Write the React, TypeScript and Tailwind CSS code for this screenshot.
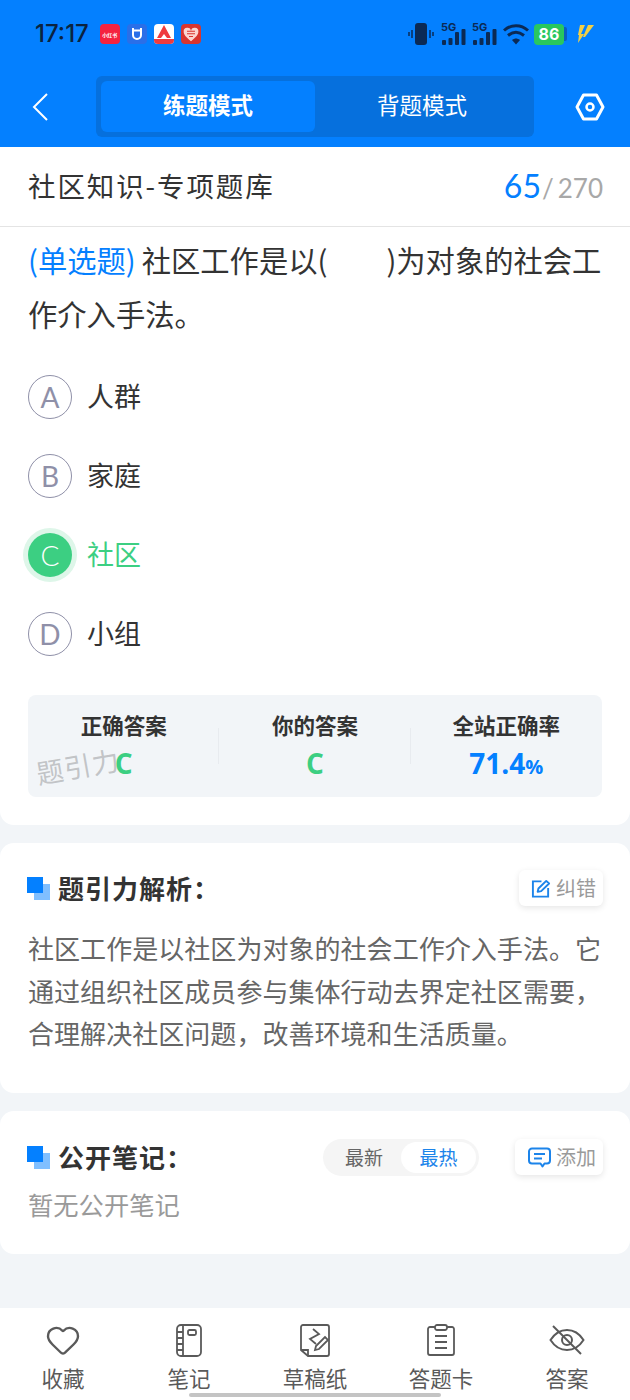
import React from "react";
import { Heart } from "lucide-react";

const cjk = { fontFamily: '"Noto Sans CJK SC", "Noto Sans", sans-serif' };

function Square() {
  return (
    <span className="relative block w-[23px] h-[23px] shrink-0 ml-[-1px]">
      <span className="absolute right-0 bottom-0 w-[16px] h-[16px] bg-[#80bfff]" />
      <span className="absolute left-0 top-0 w-[16px] h-[16px] bg-[#0480ff]" />
    </span>
  );
}

function Option({ l, t, active }: { l: string; t: string; active?: boolean }) {
  return (
    <div className="h-[79px] flex items-center gap-[15px]">
      {active ? (
        <span className="w-[44px] h-[44px] rounded-full bg-[#3ccf82] ring-[5px] ring-[#def6e9] flex items-center justify-center text-white text-[28px] font-light" style={{ fontFamily: "Lato, sans-serif" }}>
          {l}
        </span>
      ) : (
        <span className="w-[44px] h-[44px] rounded-full border-[1.5px] border-[#8f90a8] flex items-center justify-center text-[#8f90a8] text-[28px]" style={{ fontFamily: "Lato, sans-serif" }}>
          {l}
        </span>
      )}
      <span className={`text-[27px] ${active ? "text-[#3ccf82]" : "text-[#333333]"}`}>{t}</span>
    </div>
  );
}

function Stat({ label, value, blue, divider }: { label: string; value: React.ReactNode; blue?: boolean; divider?: boolean }) {
  return (
    <div className="flex-1 flex flex-col items-center pt-[15px] relative">
      <span className="text-[21.5px] font-bold text-[#333333] leading-[30px]">{label}</span>
      <span className={`text-[28px] font-bold leading-[42px] mt-[2px] ${blue ? "text-[#0480ff]" : "text-[#3ccf82]"}`} style={{ fontFamily: '"Open Sans", sans-serif' }}>{value}</span>
      {divider && <span className="absolute right-0 top-[33px] h-[36px] w-px bg-[#e8ebef]" />}
    </div>
  );
}

function SmallBtn({ icon, text, wide }: { icon: React.ReactNode; text: string; wide?: boolean }) {
  return (
    <div className={`h-[36px] rounded-[6px] bg-white shadow-[0_2px_6px_rgba(0,0,0,0.1)] flex items-center gap-[5px] ${wide ? "w-[88px] pl-[13px]" : "w-[84px] pl-[12px]"}`}>
      {icon}
      <span className="text-[20px] text-[#9a9a9a]">{text}</span>
    </div>
  );
}

function NavItem({ icon, label }: { icon: React.ReactNode; label: string }) {
  return (
    <div className="w-[126px] flex flex-col items-center">
      <div className="h-[38px] flex items-center justify-center">{icon}</div>
      <span className="text-[21.5px] leading-[30px] text-[#5a5a5a] mt-[4px]">{label}</span>
    </div>
  );
}

function Signal() {
  return (
    <svg width="26" height="26" viewBox="0 0 26 26">
      <text x="0" y="10" fontSize="11" fontWeight="700" fill="#0b2a55" fontFamily="Inter, sans-serif">5G</text>
      <rect x="1" y="19" width="4" height="5" rx="1" fill="#0b2a55" />
      <rect x="7.500" y="17" width="4" height="7" rx="1" fill="#0b2a55" />
      <rect x="14" y="11" width="4" height="13" rx="1" fill="#0b2a55" />
      <rect x="20.500" y="8" width="4" height="16" rx="1" fill="#0b2a55" />
    </svg>
  );
}

export default function App() {
  return (
    <div className="relative w-[630px] h-[1400px] overflow-hidden bg-[#f2f5f8] flex flex-col" style={cjk}>
      {/* Header */}
      <header className="bg-[#0480ff] h-[147px] shrink-0 flex flex-col">
        <div className="h-[76px] pt-[23px] pl-[35px] pr-[35px] flex items-start">
          <span className="text-[24px] leading-[22px] font-medium text-[#0b2340]" style={{ fontFamily: "Inter, sans-serif" }}>17:17</span>
          <div className="flex gap-[7px] ml-[11px] mt-[1px]">
            <span className="w-[20px] h-[20px] rounded-[4px] bg-[#f5223f] flex items-center justify-center text-white text-[5px] font-bold leading-none">小红书</span>
            <span className="w-[20px] h-[20px] rounded-[4px] bg-[#2a6fe8] flex items-center justify-center">
              <svg width="12" height="14" viewBox="0 0 12 14" fill="none"><path d="M2 1v7a4 4 0 0 0 8 0V1M2 3.500h8" stroke="#fff" strokeWidth="2" /></svg>
            </span>
            <span className="w-[20px] h-[20px] rounded-[4px] bg-white overflow-hidden flex flex-col items-center">
              <svg width="16" height="15" viewBox="0 0 16 15"><path d="M8 1L1 14h4l3-4 3 4h4z" fill="#ef3b3f" /></svg>
              <span className="w-full h-[5px] bg-[#ef3b3f]" />
            </span>
            <span className="w-[20px] h-[20px] rounded-[4px] bg-[#d9352e] flex items-center justify-center">
              <svg width="16" height="15" viewBox="0 0 24 22"><path d="M12 21C4 15 1 11 1 7a5.500 5.500 0 0 1 11-1 5.500 5.500 0 0 1 11 1c0 4-3 8-11 14z" fill="#fbd5cf" /><path d="M6 6h12M6 10h12M9 14h6" stroke="#d9352e" strokeWidth="1.600" /></svg>
            </span>
          </div>
          <div className="ml-auto flex items-center gap-[5px] mt-[-2px]">
            <svg width="26" height="24" viewBox="0 0 26 24">
              <rect x="7" y="1" width="12" height="22" rx="3" fill="#0b2a55" />
              <path d="M4 8v8M1 10v4M22 8v8M25 10v4" stroke="#0b2a55" strokeWidth="1.500" />
            </svg>
            <span className="ml-[2px]"><Signal /></span>
            <span><Signal /></span>
            <svg width="26" height="22" viewBox="0 0 26 22" fill="none">
              <path d="M1 7.500C8 1 18 1 25 7.500" stroke="#0b2a55" strokeWidth="3" />
              <path d="M5 12.500c5-4 11-4 16 0" stroke="#0b2a55" strokeWidth="3" />
              <path d="M9 17c3-2 5-2 8 0l-4 4.500z" fill="#0b2a55" />
            </svg>
            <span className="relative flex items-center">
              <span className="w-[30px] h-[21px] rounded-[4px] bg-[#29c75f] text-white text-[16px] font-bold flex items-center justify-center" style={{ fontFamily: "Inter, sans-serif" }}>86</span>
              <span className="w-[3px] h-[14px] rounded-r-[2px] bg-[#0b5fc0]" />
            </span>
            <svg width="18" height="20" viewBox="0 0 18 20" className="ml-[5px]">
              <path d="M3 1h5L4 10h3L1 19l1-8H1z" fill="#f3cf45" />
              <path d="M11 1h6l-9 12H6z" fill="#f3cf45" />
            </svg>
          </div>
        </div>
        <div className="flex items-center h-[61px] pl-[32px] pr-[25px]">
          <svg width="16" height="28" viewBox="0 0 16 28" fill="none" className="shrink-0">
            <path d="M15 1L2 14l13 13" stroke="#fff" strokeWidth="2" />
          </svg>
          <div className="ml-[48px] w-[438px] h-[61px] bg-[#0670dd] rounded-[6px] p-[5px] flex">
            <div className="w-[214px] h-[51px] pb-[3px] bg-[#0480ff] rounded-[6px] flex items-center justify-center text-white text-[22.5px] font-bold">练题模式</div>
            <div className="flex-1 pb-[3px] flex items-center justify-center text-white text-[22.5px]">背题模式</div>
          </div>
          <svg width="30" height="28" viewBox="0 0 30 28" fill="none" className="ml-auto">
            <path d="M8.500 2h13L28 14l-6.500 12h-13L2 14z" stroke="#fff" strokeWidth="3" strokeLinejoin="round" />
            <circle cx="15" cy="14" r="3.500" stroke="#fff" strokeWidth="2.500" />
          </svg>
        </div>
      </header>

      {/* Question card */}
      <section className="bg-white rounded-b-[14px] h-[678px] shrink-0">
        <div className="h-[80px] pl-[28px] pr-[27px] pb-[2px] border-b border-[#e4e4e4] flex items-center justify-between">
          <span className="text-[27.5px] text-[#333333] tracking-[1.9px]">社区知识-专项题库</span>
          <span className="flex items-baseline" style={{ fontFamily: "Lato, sans-serif" }}>
            <span className="text-[32px] text-[#0480ff]">65</span>
            <span className="text-[26px] text-[#a8a8a8] ml-[1px]">/</span>
            <span className="text-[26px] text-[#a8a8a8] ml-[4px]">270</span>
          </span>
        </div>
        <div className="px-[28px]">
          <p className="text-[29.3px] leading-[54px] text-[#333333] mt-[5px]">
            <span className="text-[#0480ff]">(单选题)</span><span className="ml-[6px]">社区工作是以(</span><span className="pl-[59px]" />)为对象的社会工作介入手法。
          </p>
          <div className="mt-[17px]">
            <Option l="A" t="人群" />
            <Option l="B" t="家庭" />
            <Option l="C" t="社区" active />
            <Option l="D" t="小组" />
          </div>
          <div className="relative mt-[22px] h-[102px] rounded-[8px] bg-[#f2f5f8] flex">
            <Stat label="正确答案" value="C" divider />
            <Stat label="你的答案" value="C" divider />
            <Stat label="全站正确率" value={<>71.4<span className="text-[20px]">%</span></>} blue />
            <span className="absolute left-[8px] top-[56px] text-[27px] leading-[30px] text-[#b5b7ba]/80 -rotate-[10deg] tracking-[1px]">题引力</span>
          </div>
        </div>
      </section>

      {/* Analysis */}
      <section className="bg-white rounded-[14px] h-[250px] shrink-0 mt-[18px] pl-[28px] pr-[27px] pt-[27px]">
        <div className="flex items-center justify-between h-[36px]">
          <div className="flex items-center gap-[8px]">
            <Square />
            <span className="text-[26px] font-bold text-[#333333] tracking-[1px] mt-[-1px]">题引力解析：</span>
          </div>
          <SmallBtn
            text="纠错"
            icon={
              <svg width="20" height="21" viewBox="0 0 21 21" fill="none" stroke="#1c84ea" strokeWidth="2">
                <path d="M11 3H2v16h16v-9" />
                <path d="M7 14l.8-3.500L16 2.500l3 2.800-8.300 8z" strokeLinejoin="round" />
              </svg>
            }
          />
        </div>
        <p className="mt-[21px] text-[26.05px] leading-[42.5px] text-[#666666]">
          社区工作是以社区为对象的社会工作介入手法。它通过组织社区成员参与集体行动去界定社区需要，合理解决社区问题，改善环境和生活质量。
        </p>
      </section>

      {/* Notes */}
      <section className="bg-white rounded-[14px] h-[143px] shrink-0 mt-[18px] pl-[28px] pr-[27px] pt-[28px]">
        <div className="flex items-center h-[36px]">
          <Square />
          <span className="ml-[8px] text-[26px] font-bold text-[#333333] tracking-[1px] mt-[-1px]">公开笔记：</span>
          <div className="ml-auto mr-[36px] h-[37px] w-[156px] rounded-full bg-[#f5f5f5] flex items-center p-[3px] pl-0">
            <span className="w-[78px] pl-[4px] text-center text-[19px] text-[#666666]">最新</span>
            <span className="w-[75px] h-[31px] rounded-full bg-white flex items-center justify-center text-[19px] text-[#1c84ea]">最热</span>
          </div>
          <SmallBtn
            wide
            text="添加"
            icon={
              <svg width="23" height="21" viewBox="0 0 23 21" fill="none" stroke="#1c84ea" strokeWidth="2">
                <path d="M4 1.500h15a3 3 0 0 1 3 3v9a3 3 0 0 1-3 3h-2.500l-2 3-2-3H4a3 3 0 0 1-3-3v-9a3 3 0 0 1 3-3z" strokeLinejoin="round" />
                <path d="M6 7h11M6 11.500h8" />
              </svg>
            }
          />
        </div>
        <p className="text-[25.3px] leading-[38px] text-[#9a9a9a] mt-[10px]">暂无公开笔记</p>
      </section>

      {/* Bottom bar */}
      <nav className="absolute left-0 right-0 bottom-0 h-[92px] bg-white flex pt-[13px]">
        <NavItem label="收藏" icon={<Heart size={36} strokeWidth={1.600} color="#5a5a5a" />} />
        <NavItem
          label="笔记"
          icon={
            <svg width="26" height="33" viewBox="0 0 26 33" fill="none" stroke="#5a5a5a" strokeWidth="1.800">
              <rect x="1" y="1" width="24" height="31" rx="4" />
              <path d="M7 1v31M1 8h6M1 14h6M1 20h6M1 26h6" />
              <rect x="12" y="6" width="8" height="5" rx="1.500" />
            </svg>
          }
        />
        <NavItem
          label="草稿纸"
          icon={
            <svg width="30" height="33" viewBox="0 0 30 33" fill="none" stroke="#5a5a5a" strokeWidth="1.800">
              <path d="M3 1h24a2 2 0 0 1 2 2v27a2 2 0 0 1-2 2H8L1 26V3a2 2 0 0 1 2-2z" />
              <path d="M1 26h7v6" />
              <path d="M13 5l6 5-9 5 6 5" />
              <path d="M15 26l1-4 9-9 3 3-9 9z" fill="#fff" />
            </svg>
          }
        />
        <NavItem
          label="答题卡"
          icon={
            <svg width="28" height="32" viewBox="0 0 28 32" fill="none" stroke="#5a5a5a" strokeWidth="1.800">
              <path d="M8 3H3a2 2 0 0 0-2 2v24a2 2 0 0 0 2 2h22a2 2 0 0 0 2-2V5a2 2 0 0 0-2-2h-5" />
              <rect x="8" y="1" width="12" height="5" rx="2" />
              <path d="M8 12h12M8 18h12M8 24h12" />
            </svg>
          }
        />
        <NavItem
          label="答案"
          icon={
            <svg width="36" height="30" viewBox="0 0 36 30" fill="none" stroke="#5a5a5a" strokeWidth="2">
              <path d="M1.500 15C6 8 11 5 18 5s12 3 16.500 10C30 22 25 25 18 25S6 22 1.500 15z" />
              <circle cx="18" cy="15" r="5" />
              <path d="M4 1l28 28" />
            </svg>
          }
        />
      </nav>
      <span className="absolute left-[189px] top-[1393px] w-[252px] h-[4px] rounded-full bg-[#c4c4c4]" />
    </div>
  );
}
